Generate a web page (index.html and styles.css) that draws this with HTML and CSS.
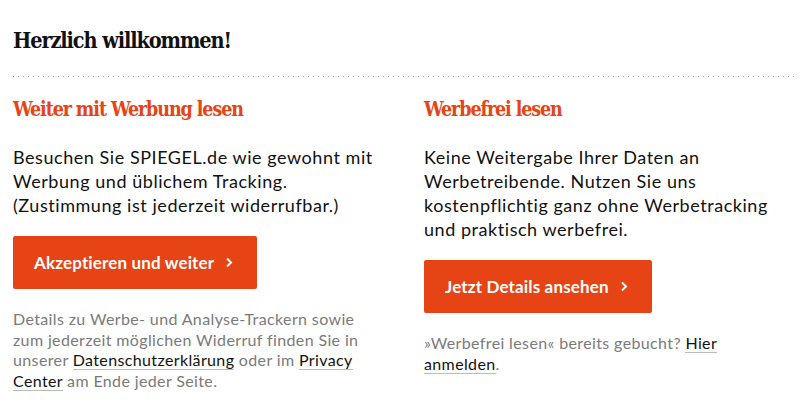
FILE: index.html
```html
<!DOCTYPE html>
<html lang="de">
<head>
<meta charset="utf-8">
<title>Herzlich willkommen!</title>
<link rel="stylesheet" href="styles.css">
</head>
<body>
<div class="consent">
  <h1 class="title">Herzlich willkommen!</h1>
  <div class="divider"></div>
  <div class="columns">
    <section class="col">
      <h2 class="col-title">Weiter mit Werbung lesen</h2>
      <p class="col-text">Besuchen Sie SPIEGEL.de wie gewohnt mit Werbung und üblichem Tracking. (Zustimmung ist jederzeit widerrufbar.)</p>
      <button class="btn">Akzeptieren und weiter <svg class="chev" width="8" height="11" viewBox="0 0 8 11"><path d="M2 1.5 L6 5.5 L2 9.5" fill="none" stroke="#fff" stroke-width="2"/></svg></button>
      <p class="note">Details zu Werbe- und Analyse-Trackern sowie zum jederzeit möglichen Widerruf finden Sie in unserer <a class="link" href="#">Datenschutzerklärung</a> oder im <a class="link" href="#">Privacy Center</a> am Ende jeder Seite.</p>
    </section>
    <section class="col">
      <h2 class="col-title">Werbefrei lesen</h2>
      <p class="col-text">Keine Weitergabe Ihrer Daten an Werbetreibende. Nutzen Sie uns kostenpflichtig ganz ohne Werbetracking und praktisch werbefrei.</p>
      <button class="btn">Jetzt Details ansehen <svg class="chev" width="8" height="11" viewBox="0 0 8 11"><path d="M2 1.5 L6 5.5 L2 9.5" fill="none" stroke="#fff" stroke-width="2"/></svg></button>
      <p class="note">»Werbefrei lesen« bereits gebucht? <a class="link" href="#">Hier anmelden</a>.</p>
    </section>
  </div>
</div>
</body>
</html>
```
FILE: styles.css
```css
html, body {
  margin: 0;
  padding: 0;
  background: #fff;
}
.consent {
  padding: 28px 14px 0 13px;
  font-family: Lato, "Open Sans", sans-serif;
  color: #111;
}
.title {
  margin: 0;
  font-family: "DejaVu Serif Condensed", "DejaVu Serif", serif;
  font-stretch: condensed;
  font-weight: bold;
  font-size: 21.5px;
  line-height: 26px;
  color: #111;
  letter-spacing: -1.1px;
}
.divider {
  margin-top: 22px;
  height: 1px;
  background-image: linear-gradient(to right, #9a9a9a 1px, transparent 1px);
  background-size: 5px 1px;
  background-repeat: repeat-x;
}
.columns {
  display: grid;
  grid-template-columns: 1fr 1fr;
  column-gap: 38px;
  margin-top: 21px;
}
.col {
  display: flex;
  flex-direction: column;
  align-items: flex-start;
  padding-right: 10px;
}
.col-title {
  margin: 0;
  font-family: "DejaVu Serif Condensed", "DejaVu Serif", serif;
  font-stretch: condensed;
  font-weight: bold;
  font-size: 19.5px;
  line-height: 24px;
  color: #e64415;
  letter-spacing: -1.1px;
}
.col-text {
  margin: 23px 0 0;
  font-size: 18px;
  line-height: 24px;
  letter-spacing: 0.55px;
  color: #111;
}
.btn {
  margin-top: 19px;
  display: inline-flex;
  align-items: center;
  gap: 11px;
  height: 53px;
  padding: 0 24px 0 21px;
  border: none;
  border-radius: 2px;
  background: #e64415;
  color: #fff;
  font-family: Lato, sans-serif;
  font-weight: bold;
  font-size: 17px;
  letter-spacing: 0.15px;
}
.chev {
  display: block;
}
.note {
  margin: 20px 0 0;
  font-size: 16px;
  line-height: 20.5px;
  letter-spacing: 0.37px;
  color: #7a7a7a;
}
.link {
  color: #111;
  text-decoration: none;
  border-bottom: 1px solid #bbb;
}
```
